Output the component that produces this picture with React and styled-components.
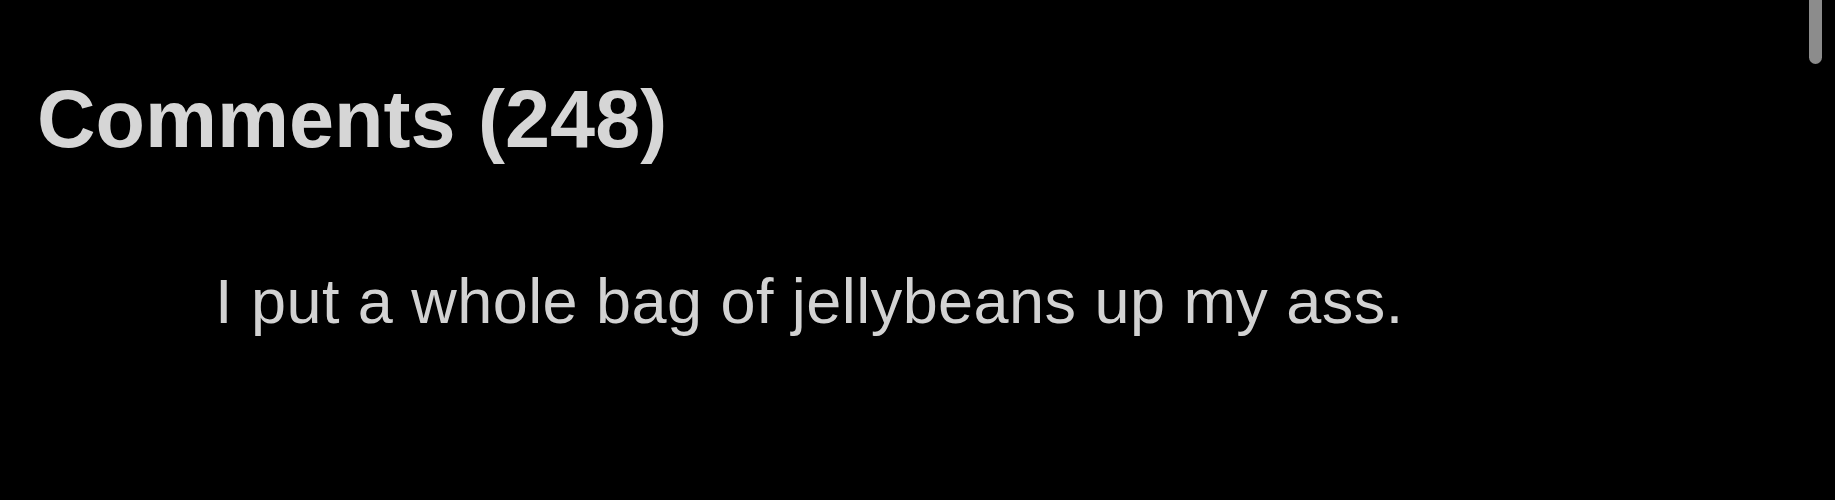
import React from "react";
import styled, { createGlobalStyle } from "styled-components";

const Global = createGlobalStyle`
  html, body { margin: 0; padding: 0; background: #000; }
  body { font-family: "Liberation Sans", Arial, Helvetica, sans-serif; }
`;

const Page = styled.div`
  position: relative;
  width: 1835px;
  height: 500px;
  background: #000;
  overflow: hidden;
  box-sizing: border-box;
  padding: 73px 0 0 37px;
  display: flex;
  flex-direction: column;
`;

const Heading = styled.h2`
  margin: 0;
  font-family: "Liberation Sans", Arial, Helvetica, sans-serif;
  font-weight: 700;
  font-size: 81px;
  line-height: 92px;
  color: #d6d6d6;
  letter-spacing: 0;
`;

const CommentList = styled.div`
  display: flex;
  flex-direction: column;
  padding: 100px 0 0 178px;
`;

const CommentText = styled.p`
  margin: 0;
  font-family: "Liberation Sans", Arial, Helvetica, sans-serif;
  font-weight: 400;
  font-size: 63px;
  line-height: 72px;
  color: #d2d2d2;
  letter-spacing: 0.45px;
`;

const ScrollThumb = styled.div`
  position: absolute;
  top: -8px;
  right: 13px;
  width: 13px;
  height: 72px;
  border-radius: 7px;
  background: #8c8c8c;
`;

export default function App() {
  return (
    <>
      <Global />
      <Page>
        <Heading>Comments (248)</Heading>
        <CommentList>
          <CommentText>I put a whole bag of jellybeans up my ass.</CommentText>
        </CommentList>
        <ScrollThumb />
      </Page>
    </>
  );
}
